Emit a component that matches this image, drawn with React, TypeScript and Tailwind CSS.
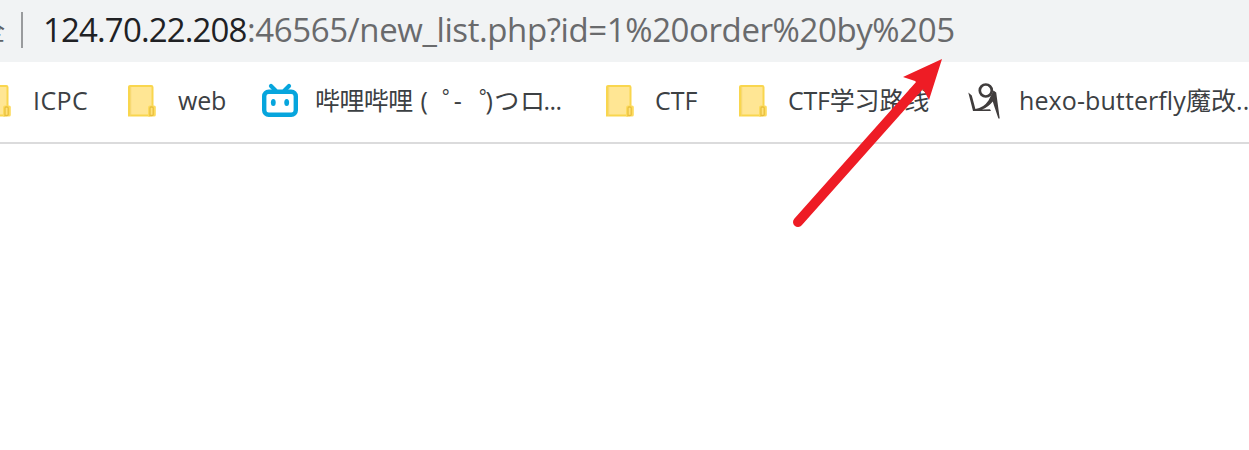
import type { ReactNode } from 'react';

function Folder() {
  return (
    <svg className="block h-8 w-7" viewBox="0 0 28 32">
      <path d="M1.5 1H23.5Q25 1 25 2.5V31H1.5Q.3 31 .3 30V2Q.3 1 1.5 1Z" fill="#ffe694" />
      <path d="M24.5 21V2.2Q24.5 1 23.3 1H2Q1 1 1 2V30.5H22" fill="none" stroke="#f9d64e" strokeWidth="2" />
      <path d="M2.7 2V31" stroke="#f5d66b" strokeWidth="1" />
      <path d="M20 31.5V22.5Q20 20.5 22 20.5H26Q27.8 20.5 27.8 22V30Q27.8 31.5 26 31.5Z" fill="#fddb5e" />
      <path d="M22 30.5V23Q22 22 23 22H24Q25.2 22 25.2 23V29.5Q25.2 30.5 24 30.5Z" fill="#ffe17a" stroke="#e9bf3d" strokeWidth="1.3" />
    </svg>
  );
}

function Bilibili() {
  return (
    <svg className="mb-[2px] block h-9 w-9" viewBox="0 0 36 36" fill="none" stroke="#06a5dd">
      <path d="M9 4L13.5 8.5M27 4L22.5 8.5" strokeWidth="4.2" strokeLinecap="round" />
      <rect x="2.2" y="9.7" width="31.6" height="23" rx="4.5" strokeWidth="4.4" />
      <ellipse cx="11.3" cy="20.5" rx="2.4" ry="3.5" fill="#06a5dd" stroke="none" />
      <ellipse cx="24.7" cy="20.5" rx="2.4" ry="3.5" fill="#06a5dd" stroke="none" />
    </svg>
  );
}

function Butterfly() {
  return (
    <svg className="block h-9 w-8" viewBox="0 0 32 36">
      <circle cx="17.8" cy="7.5" r="6" fill="none" stroke="#403d3d" strokeWidth="2.7" />
      <path d="M.3 9.5L3.8 12.5L7.4 26Q15.5 25 20.5 17.5L25.5 7.5L28.2 9.5L31.7 35.5L30.4 35.5L26 22.5L24.8 18.5Q20 24.5 14 26.4L22 26.3L23 28H5Z" fill="#403d3d" />
    </svg>
  );
}

function Bookmark({ icon, label, width, text }: { icon: ReactNode; label: ReactNode; width: string; text: string }) {
  return (
    <div className={`flex shrink-0 items-center ${width}`}>
      {icon}
      <span className={`mb-[2px] whitespace-pre ${text}`}>{label}</span>
    </div>
  );
}

const bilibiliTitle = (
  <>
    哔哩哔哩 <span className="ml-[2px]">(</span><span className="ml-[15px]">゜</span><span className="-ml-[13px]">-</span><span className="ml-[18px]">゜</span><span className="-ml-[18px]">)</span><span className="ml-[2px] tracking-[0.6px]">つロ</span><span className="-ml-[2px] tracking-[-0.6px]">...</span>
  </>
);

export default function App() {
  return (
    <div className="relative h-[450px] w-full overflow-hidden bg-white font-['Open_Sans','Noto_Sans_CJK_SC',sans-serif]">
      <header className="flex h-[62px] items-center overflow-hidden bg-[#f1f3f4]">
        <div className="flex h-9 w-[21px] shrink-0 items-center justify-end pr-4 text-[25px] text-[#5f6368]">
          <span>全</span>
        </div>
        <div className="mb-[2px] h-9 w-0.5 shrink-0 bg-[#999b9d]" />
        <div className="mb-[3px] ml-5 flex whitespace-pre text-[33px] leading-[44px]">
          <span className="w-[204px] shrink-0 tracking-[-0.85px] text-[#202124]">124.70.22.208</span>
          <span className="tracking-[-0.4px] text-[#696a6c]">:46565/new_list.php?id=1%20order%20by%205</span>
        </div>
      </header>
      <nav className="flex h-[82px] overflow-hidden border-b-2 border-[#dbdbdc] pb-[2px] text-[25px] leading-9 text-[#3c4043]">
        <Bookmark icon={<Folder />} label="ICPC" width="-ml-[17px] w-[145px]" text="ml-[22px] tracking-[0.4px]" />
        <Bookmark icon={<Folder />} label="web" width="w-[134px]" text="ml-[22px] tracking-[-0.2px]" />
        <Bookmark icon={<Bilibili />} label={bilibiliTitle} width="w-[344px]" text="ml-[17px] tracking-[-0.6px]" />
        <Bookmark icon={<Folder />} label="CTF" width="w-[133px]" text="ml-[21px]" />
        <Bookmark icon={<Folder />} label="CTF学习路线" width="w-[229px]" text="ml-[21px] tracking-[-0.2px]" />
        <Bookmark icon={<Butterfly />} label="hexo-butterfly魔改..." width="w-[300px]" text="ml-[19px] tracking-[0.1px]" />
      </nav>
      <svg className="pointer-events-none absolute left-[780px] top-10 h-[200px] w-[180px]" viewBox="0 0 180 200">
        <path d="M18 182L140 45" stroke="#ee1c25" strokeWidth="10" strokeLinecap="round" />
        <path d="M162 19L123 37L135 41L143 49L149 60Z" fill="#ee1c25" />
      </svg>
    </div>
  );
}
